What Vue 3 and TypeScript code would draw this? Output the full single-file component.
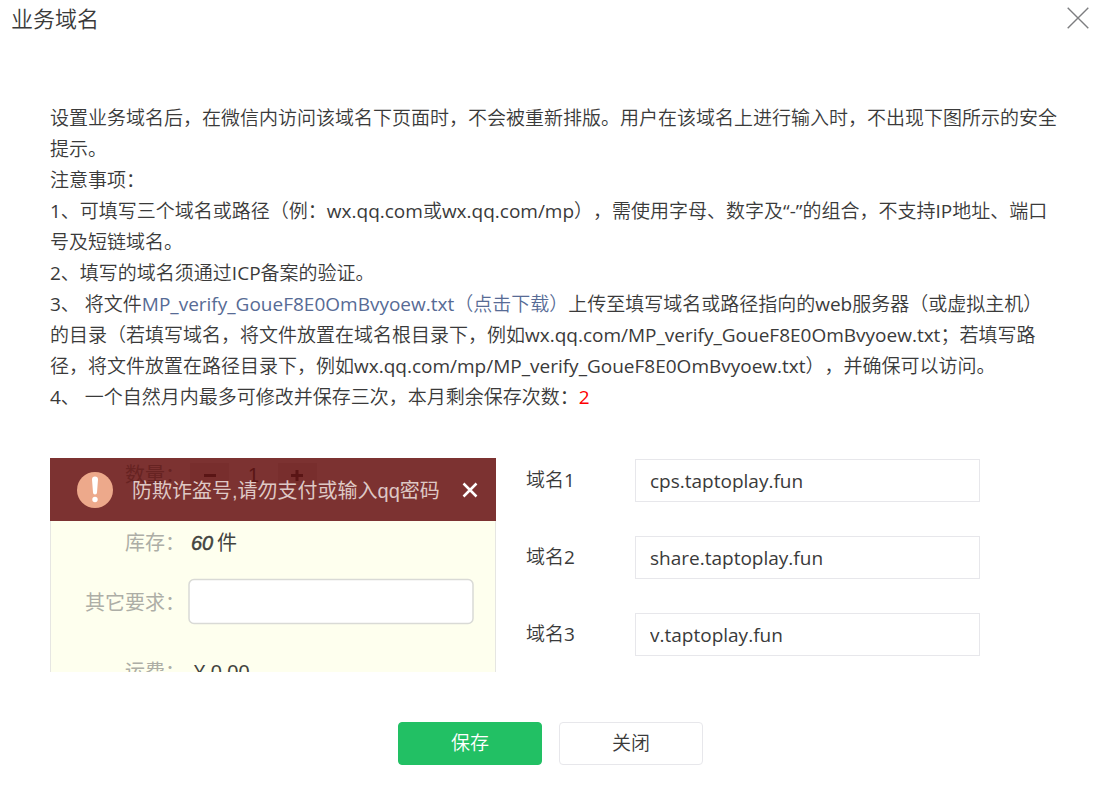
<script setup lang="ts">
import { ref } from 'vue'

interface DomainField {
  id: string
  label: string
  value: string
}

const remaining = ref<number>(2)
const verifyFile = 'MP_verify_GoueF8E0OmBvyoew.txt'

const domains = ref<DomainField[]>([
  { id: 'domain-1', label: '域名1', value: 'cps.taptoplay.fun' },
  { id: 'domain-2', label: '域名2', value: 'share.taptoplay.fun' },
  { id: 'domain-3', label: '域名3', value: 'v.taptoplay.fun' },
])
</script>

<template>
  <main class="dialog">
    <header class="dialog-head">
      <h1 class="title">业务域名</h1>
      <button class="close" type="button" aria-label="关闭对话框">
        <svg width="22" height="22" viewBox="0 0 22 22" aria-hidden="true">
          <path d="M.7.7l20.6 20.6M21.3.7L.7 21.3" fill="none" stroke="#7d7e80" stroke-width="1.4" />
        </svg>
      </button>
    </header>

    <section class="notice">
      <p>设置业务域名后，在微信内访问该域名下页面时，不会被重新排版。用户在该域名上进行输入时，不出现下图所示的安全<br />提示。</p>
      <p>注意事项：</p>
      <p>1、可填写三个域名或路径（例：wx.qq.com或wx.qq.com/mp），需使用字母、数字及“-”的组合，不支持IP地址、端口<br />号及短链域名。</p>
      <p>2、填写的域名须通过ICP备案的验证。</p>
      <p>3、 将文件<a href="#">{{ verifyFile }}（点击下载）</a>上传至填写域名或路径指向的web服务器（或虚拟主机）<br />的目录（若填写域名，将文件放置在域名根目录下，例如wx.qq.com/{{ verifyFile }}；若填写路<br />径，将文件放置在路径目录下，例如wx.qq.com/mp/{{ verifyFile }}），并确保可以访问。</p>
      <p>4、 一个自然月内最多可修改并保存三次，本月剩余保存次数：<span class="count">{{ remaining }}</span></p>
    </section>

    <form id="domain-form" class="body" @submit.prevent>
      <svg class="sample" viewBox="0 0 446 214" role="img" aria-label="安全提示示例">
        <rect width="446" height="214" fill="#feffee" />
        <path d="M.5 63v151M445.5 63v151" stroke="#e6e6e2" />
        <rect width="446" height="63" fill="#7c3231" />
        <g fill="#672322">
          <text x="75" y="24">数量：</text>
          <rect x="140" y="5" width="39" height="24" fill="#782e2d" />
          <rect x="228" y="5" width="39" height="24" fill="#782e2d" />
          <path d="M154 16h12v3h-12zM241 16h12v3h-12zM245.500 12h3v11h-3z" fill="#5a1515" />
          <text x="198" y="24" fill="#5a1515">1</text>
        </g>
        <circle cx="45" cy="32" r="18" fill="#eda98b" />
        <path d="M42 21.500a3 3 0 0 1 6 0l-1 13a2 2 0 0 1-4 0z" fill="#fff" />
        <circle cx="45" cy="41.500" r="2.700" fill="#fff" />
        <text x="82" y="40" fill="#dec8c5">防欺诈盗号,请勿支付或输入qq密码</text>
        <path d="M413.500 25.500l13 13M426.500 25.500l-13 13" stroke="#fff" stroke-width="2.500" />
        <g fill="#adaea6">
          <text x="75" y="92">库存：</text>
          <text x="35" y="152">其它要求：</text>
          <text x="75" y="221">运费：</text>
        </g>
        <g fill="#42433e">
          <text x="141" y="92" class="stock">60</text>
          <text x="167" y="92">件</text>
          <text x="144" y="221">¥ 0.00</text>
        </g>
        <rect x="139" y="121.500" width="284" height="44" rx="5" fill="#fff" stroke="#d9dad6" stroke-width="1.500" />
      </svg>

      <div class="fields">
        <div v-for="domain in domains" :key="domain.id" class="field">
          <label :for="domain.id">{{ domain.label }}</label>
          <input :id="domain.id" v-model="domain.value" type="text" />
        </div>
      </div>
    </form>

    <footer class="actions">
      <button class="btn primary" type="submit" form="domain-form">保存</button>
      <button class="btn" type="button">关闭</button>
    </footer>
  </main>
</template>

<style>
body {
  margin: 0;
  background: #fff;
}
</style>

<style scoped>
.dialog {
  color: #3a3a3a;
  font-family: "Open Sans", "Noto Sans CJK SC DemiLight", "Noto Sans CJK SC", sans-serif;
  font-size: 19px;
  line-height: 31px;
  text-spacing-trim: space-all;
}

.dialog-head {
  display: flex;
  align-items: center;
  justify-content: space-between;
  height: 36px;
  padding: 0 21px 0 11px;
}

.title {
  margin: 0;
  font-size: 22px;
  font-weight: 400;
}

.close {
  display: flex;
  padding: 0;
  border: 0;
  background: none;
  cursor: pointer;
}

.notice {
  padding: 67px 36px 0 50px;
}

.notice p {
  margin: 0;
}

.notice a {
  color: #576b95;
  text-decoration: none;
}

.count {
  color: #f00;
}

.body {
  display: flex;
  flex-wrap: wrap;
  gap: 30px;
  padding: 45px 50px 0;
}

.sample {
  width: 446px;
  height: 214px;
  font-family: "Liberation Sans", "Noto Sans CJK SC", sans-serif;
  font-size: 20px;
}

.stock {
  font-style: italic;
  stroke: #42433e;
  stroke-width: 0.5px;
}

.fields {
  display: flex;
  flex-direction: column;
  gap: 34px;
  padding-top: 1px;
}

.field {
  display: flex;
  align-items: center;
}

.field label {
  width: 109px;
}

.field input {
  box-sizing: border-box;
  width: 345px;
  height: 43px;
  padding: 0 14px;
  border: 1px solid #e7e7eb;
  border-radius: 0;
  background: #fff;
  color: inherit;
  font: inherit;
  outline: none;
}

.actions {
  display: flex;
  justify-content: center;
  gap: 17px;
  padding: 50px 9px 25px 0;
}

.btn {
  box-sizing: border-box;
  width: 144px;
  height: 43px;
  padding: 0;
  border: 1px solid #e7e7eb;
  border-radius: 4px;
  background: #fff;
  color: inherit;
  font: inherit;
  cursor: pointer;
}

.primary {
  border-color: #22c064;
  background: #22c064;
  color: #fff;
}
</style>
